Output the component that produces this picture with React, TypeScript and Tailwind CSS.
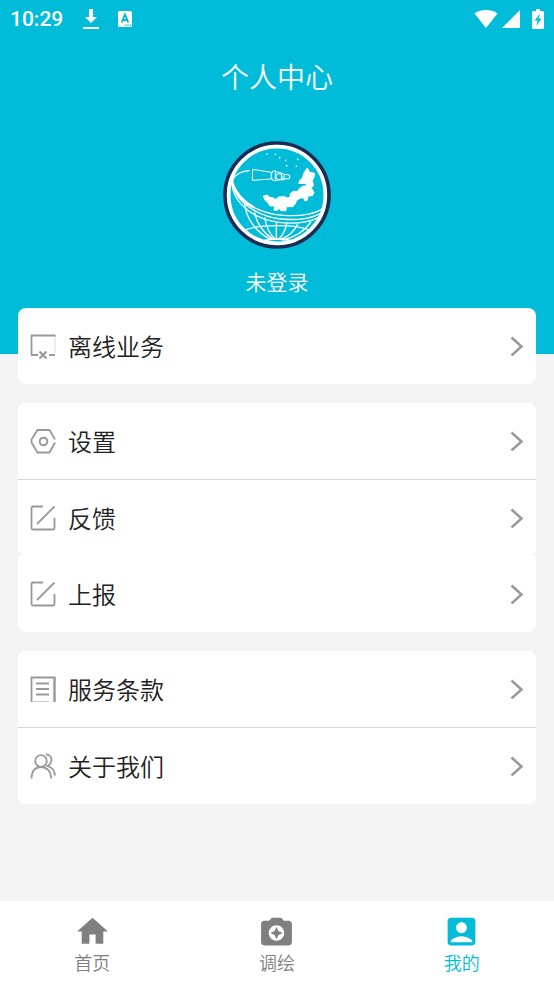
import { useState, type ReactNode } from 'react';
import { MdAccountBox, MdHome } from 'react-icons/md';

type TabKey = 'home' | 'survey' | 'mine';

function StatusBar() {
    return (
        <div className="flex h-9 items-center justify-between px-2.5 pt-0.5">
            <div className="flex items-center">
                <span className="font-['Roboto'] text-[21px] font-medium leading-6">10:29</span>
                <svg className="ml-5 h-5 w-4" viewBox="0 0 16 20" fill="currentColor" aria-hidden="true">
                    <path d="M6 0h4v8h4l-6 6-6-6h4zM0 18h16v2H0z" />
                </svg>
                <svg className="ml-[18px] size-4" viewBox="0 0 16 16" aria-hidden="true">
                    <rect x="1" width="14" height="16" rx="1.5" fill="currentColor" />
                    <path
                        d="M4.7 11.5 8 3.5l3.3 8M5.8 9h4.4"
                        fill="none"
                        stroke="#00bcd8"
                        strokeWidth="1.9"
                    />
                    <path d="M8 13.5h1.4v1.2H8zM10.3 13.5h1.4v1.2h-1.4zM12.6 13.5H14v1.2h-1.4z" fill="#00bcd8" />
                </svg>
            </div>
            <div className="flex items-center">
                <svg className="h-[18px] w-6" viewBox="0 0 24 18" fill="currentColor" aria-hidden="true">
                    <path d="M.5 3.5C4 .8 8 0 12 0s8 .8 11.5 3.5L12 18z" />
                </svg>
                <svg className="ml-1 size-[18px]" viewBox="0 0 18 18" fill="currentColor" aria-hidden="true">
                    <path d="M18 0v18H0z" />
                </svg>
                <svg className="ml-3 h-5 w-3" viewBox="0 0 12 20" aria-hidden="true">
                    <path
                        d="M4 0h4v2h2.5q1.5 0 1.5 1.5v15q0 1.5-1.5 1.5h-9Q0 20 0 18.5v-15Q0 2 1.5 2H4z"
                        fill="currentColor"
                    />
                    <path d="M8 4.5 2.5 11.5h3L4.5 17 9.5 9.5H6.5z" fill="#00bcd8" />
                </svg>
            </div>
        </div>
    );
}

function Emblem() {
    return (
        <svg className="size-[108px]" viewBox="33 33 324 324" fill="none" aria-hidden="true">
            <circle cx="195" cy="195" r="156" stroke="#1d2b52" strokeWidth="11" />
            <circle cx="195" cy="195" r="145" stroke="#fff" strokeWidth="11" />

            {/* orbit bands */}
            <g stroke="#fff" strokeLinecap="round">
                <path d="M112 122C82 125 62 138 62 156C64 214 150 252 215 256C270 260 318 250 337 232" strokeWidth="4" />
                <path d="M62 156C66 216 142 260 206 267C262 272 312 264 334 244" strokeWidth="4" />
                <path d="M60 160C64 226 136 270 200 277C254 283 306 276 329 256" strokeWidth="4" />
                <path d="M62 162C74 194 96 216 124 231" strokeWidth="7" />
            </g>

            {/* globe grid */}
            <g stroke="#fff" strokeWidth="4">
                <path d="M98 220C102 264 130 306 178 329" />
                <path d="M127 246C134 280 152 308 184 328" />
                <path d="M158 262C162 288 172 312 190 328" />
                <path d="M193 278V328" />
                <path d="M224 280C220 302 212 318 198 328" />
                <path d="M258 280C248 304 230 320 204 329" />
                <path d="M297 275C278 304 250 322 210 330" />
                <path d="M102 299C142 284 248 281 291 300" />
                <path d="M156 332C180 325 210 325 236 332" strokeWidth="5" />
            </g>

            {/* satellite */}
            <g stroke="#fff" strokeWidth="3" strokeLinejoin="round">
                <path d="M122 118 178 127V147L121 151z" />
                <path d="M181 124 190 122V153L180 149Q176 137 181 124z" />
                <path d="M190 125 207 128 211 148 190 152" />
                <circle cx="201" cy="140" r="9" />
                <path d="M207 129 216 133V149L207 150M216 133 233 135V146L216 147" />
            </g>

            {/* land */}
            <path
                d="M278 125 286 114 293 127 308 130 306 142 301 150 304 166 298 174 306 188 301 197 288 198 285 212 278 212 275 203 263 205 253 212 250 222 242 230 223 230 222 242 206 242 202 235 193 242 186 240 188 228 174 228 168 218 160 212 154 198 166 195 173 202 184 203 190 209 200 201 218 200 226 204 236 200 234 192 244 184 256 185 262 176 274 168 284 168 282 160 260 160 264 150 272 144 274 134z"
                fill="#fff"
                stroke="#fff"
                strokeWidth="3"
                strokeLinejoin="round"
            />

            {/* stars */}
            <g fill="#fff">
                <circle cx="165" cy="72" r="2.5" />
                <circle cx="190" cy="73" r="2.5" />
                <circle cx="203" cy="83" r="2.5" />
                <circle cx="221" cy="91" r="2.5" />
                <circle cx="257" cy="88" r="2.5" />
                <circle cx="224" cy="107" r="2.5" />
                <circle cx="253" cy="109" r="2.5" />
            </g>
        </svg>
    );
}

function RowIcon({ children }: { children: ReactNode }) {
    return (
        <svg
            className="size-[26px] shrink-0"
            viewBox="0 0 26 26"
            fill="none"
            stroke="#999"
            strokeWidth="1.8"
            aria-hidden="true"
        >
            {children}
        </svg>
    );
}

function OfflineIcon() {
    return (
        <RowIcon>
            <path d="M25 2v19" stroke="#ddd" strokeWidth="1" />
            <path d="M1.5 2v20M1 22h7M19 22h6" />
            <path d="M1 2.5h24.5" strokeWidth="2.2" />
            <path d="m9.5 18.5 7 7M16.5 18.5l-7 7" strokeWidth="2.2" />
        </RowIcon>
    );
}

function SettingsIcon() {
    return (
        <RowIcon>
            <path d="M25 11.5 19.5 2H7.5L1.5 11.5v3L7.5 24.5h12l5.5-10" />
            <circle cx="13.5" cy="13.5" r="3.8" strokeWidth="2" />
        </RowIcon>
    );
}

function EditIcon() {
    return (
        <RowIcon>
            <path d="M13 1.5H3q-1.5 0-1.5 1.5v20q0 1.5 1.5 1.5h20q1.5 0 1.5-1.5V13" />
            <path d="M7 19 24.5 1.5" />
        </RowIcon>
    );
}

function TermsIcon() {
    return (
        <RowIcon>
            <path d="M1.5 26V1.5h23V26" />
            <path d="M24.5 1v25M6 7.5h13M6 13h13M6 18.5h13" strokeWidth="2" />
            <path d="M2 25.5h17" stroke="#ccc" strokeWidth="1" />
        </RowIcon>
    );
}

function AboutIcon() {
    return (
        <RowIcon>
            <circle cx="11" cy="8" r="5.8" />
            <path d="M1.5 25.5C1.5 18 5.5 14 11 14s10 4 10 11.5" />
            <path d="M16 1.5c3.5 0 5.5 2.5 5.5 5.5s-1.5 4.5-4 6C22 14.5 25 17.5 25 22.5" />
        </RowIcon>
    );
}

function Card({ children }: { children: ReactNode }) {
    return <section className="overflow-hidden rounded-lg bg-white">{children}</section>;
}

function Row({ icon, label, divider = false }: { icon: ReactNode; label: string; divider?: boolean }) {
    return (
        <>
            <button type="button" className="flex h-19 w-full items-center bg-white px-3 text-left">
                {icon}
                <span className="ml-3 flex-1 text-2xl text-[#212121]">{label}</span>
                <svg
                    className="h-5 w-3.5"
                    viewBox="0 0 14 20"
                    fill="none"
                    stroke="#999"
                    strokeWidth="2.5"
                    aria-hidden="true"
                >
                    <path d="m1.5 1.5 10 9-10 9" />
                </svg>
            </button>
            {divider && <hr className="border-[#d8d8d8]" />}
        </>
    );
}

const tabs: { key: TabKey; label: string; icon: ReactNode }[] = [
    { key: 'home', label: '首页', icon: <MdHome className="size-[37px]" /> },
    {
        key: 'survey',
        label: '调绘',
        icon: (
            <svg className="size-[37px]" viewBox="0 0 24 24" fill="currentColor" aria-hidden="true">
                <path d="M9 3L7.17 5H4c-1.1 0-2 .9-2 2v12c0 1.1.9 2 2 2h16c1.1 0 2-.9 2-2V7c0-1.1-.9-2-2-2h-3.17L15 3H9zm3 15c-2.76 0-5-2.24-5-5s2.24-5 5-5 5 2.24 5 5-2.24 5-5 5zm0-1l1.25-2.75L16 13l-2.75-1.25L12 9l-1.25 2.75L8 13l2.75 1.25z" />
            </svg>
        ),
    },
    { key: 'mine', label: '我的', icon: <MdAccountBox className="size-[37px]" /> },
];

export default function App() {
    const [active, setActive] = useState<TabKey>('mine');

    return (
        <div className="flex min-h-screen flex-col bg-[#f4f4f4] font-['Noto_Sans_CJK_SC',sans-serif] font-[350]">
            <header className="bg-[#00bcd8] pb-[57px] text-white">
                <StatusBar />
                <h1 className="pt-5 text-center text-[28px] font-[350] leading-10">个人中心</h1>
                <div className="flex flex-col items-center pt-[45px]">
                    <Emblem />
                    <p className="mt-4 text-[21px] leading-8">未登录</p>
                </div>
            </header>

            <main className="-mt-[46px] flex flex-1 flex-col gap-[19px] px-[18px] pb-6">
                <Card>
                    <Row icon={<OfflineIcon />} label="离线业务" />
                </Card>
                <div>
                    <Card>
                        <Row icon={<SettingsIcon />} label="设置" divider />
                        <Row icon={<EditIcon />} label="反馈" />
                    </Card>
                    <section className="overflow-hidden rounded-b-lg bg-white">
                        <Row icon={<EditIcon />} label="上报" />
                    </section>
                </div>
                <Card>
                    <Row icon={<TermsIcon />} label="服务条款" divider />
                    <Row icon={<AboutIcon />} label="关于我们" />
                </Card>
            </main>

            <nav className="grid grid-cols-3 bg-white">
                {tabs.map((tab) => (
                    <button
                        key={tab.key}
                        type="button"
                        onClick={() => setActive(tab.key)}
                        aria-current={active === tab.key ? 'page' : undefined}
                        className={`flex flex-col items-center pb-2.5 pt-3 ${
                            active === tab.key ? 'text-[#00bcd8]' : 'text-[#808080]'
                        }`}
                    >
                        {tab.icon}
                        <span className="text-lg leading-6">{tab.label}</span>
                    </button>
                ))}
            </nav>
        </div>
    );
}
